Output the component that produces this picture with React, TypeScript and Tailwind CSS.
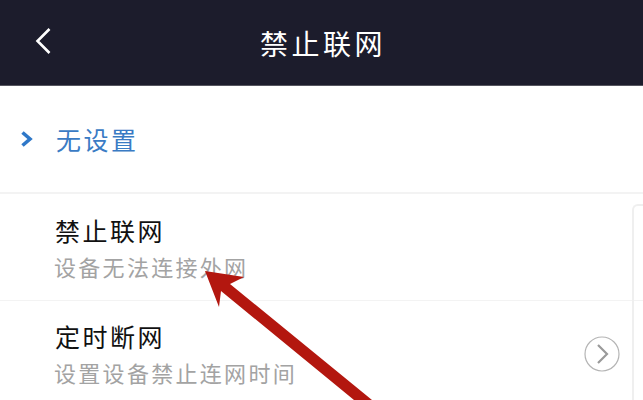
const cjk = "font-['Noto_Sans_CJK_SC','Noto_Sans_CJK_JP',sans-serif]";

const App = () => {
  return (
    <div className={`relative w-[643px] h-[400px] overflow-hidden bg-white ${cjk}`}>
      {/* Header */}
      <header className="relative flex items-center justify-center h-[86px] bg-[#1c1c2c] border-b border-[#55555f]">
        <svg className="absolute left-[34px] top-[27px] w-[20px] h-[28px]" viewBox="0 0 20 28" fill="none">
          <path d="M15.5 2 L3.5 14 L15.5 26" stroke="#fff" strokeWidth="2.6" />
        </svg>
        <h1 className="ml-[3px] text-[28px] leading-none tracking-[3.5px] text-white">禁止联网</h1>
      </header>

      {/* Current setting */}
      <div className="flex items-center h-[108px] pl-[20px] border-b-2 border-[#f3f3f3]">
        <svg className="w-[14px] h-[18px] mr-[22px]" viewBox="0 0 14 18" fill="none">
          <path d="M2.5 2.5 L10 9 L2.5 15.5" stroke="#2f78c8" strokeWidth="3.6" />
        </svg>
        <span className="text-[25px] leading-none tracking-[2.5px] text-[#3a7bc4]">无设置</span>
      </div>

      {/* Options */}
      <div className="flex flex-col justify-center h-[107px] pl-[54px] border-b border-[#f3f3f3]">
        <div className="ml-[1px] text-[25px] leading-none tracking-[2.5px] text-[#111]">禁止联网</div>
        <div className="mt-[12px] text-[22px] leading-none tracking-[2.3px] text-[#a3a3a3]">设备无法连接外网</div>
      </div>
      <div className="flex items-center justify-between h-[105px] pl-[54px] pr-[23px]">
        <div>
          <div className="ml-[1px] text-[25px] leading-none tracking-[2.5px] text-[#111]">定时断网</div>
          <div className="mt-[12px] text-[22px] leading-none tracking-[2.3px] text-[#a3a3a3]">设置设备禁止连网时间</div>
        </div>
        <svg className="w-[36px] h-[36px] shrink-0" viewBox="0 0 36 36" fill="none">
          <circle cx="18" cy="18" r="17" stroke="#b4b4b4" strokeWidth="1.2" />
          <path d="M14 9 L23 18 L14 27" stroke="#9a9a9a" strokeWidth="2.2" />
        </svg>
      </div>

      {/* Panel edge peeking in from the right */}
      <div className="absolute left-[632px] top-[204px] w-[30px] h-[220px] rounded-tl-[6px] border-l-2 border-t-2 border-[#efefef]" />

      {/* Red annotation arrow */}
      <svg className="absolute inset-0 w-[643px] h-[400px]" viewBox="0 0 643 400" fill="none">
        <path d="M205 271 L244 277 L230 284 L372 400 L354 400 L221 291 L219 307 Z" fill="#b3170f" />
      </svg>
    </div>
  );
};

export default App;
